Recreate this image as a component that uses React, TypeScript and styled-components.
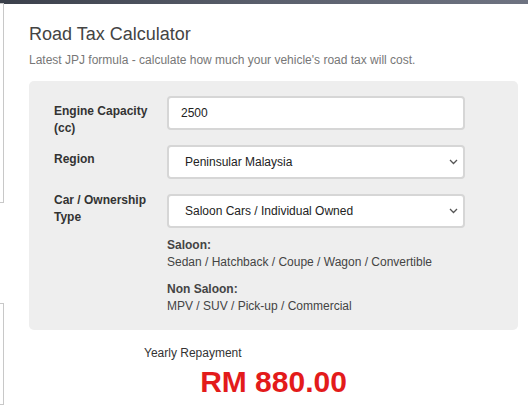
import React from "react";
import styled, { createGlobalStyle } from "styled-components";

const Global = createGlobalStyle`
  html, body { margin: 0; padding: 0; background: #fff; }
  body { font-family: "Liberation Sans", Arial, sans-serif; color: #333; }
  * { box-sizing: border-box; }
`;

const Page = styled.div`
  position: relative;
  width: 528px;
  height: 412px;
  overflow: hidden;
  background: #fff;
`;

const TopBar = styled.div`
  height: 4px;
  background: linear-gradient(90deg, #3b404b 0%, #5a5f6c 50%, #6e7381 100%);
`;

const BehindBox = styled.div<{ $top: number; $height: number }>`
  margin-top: ${(p) => p.$top}px;
  margin-left: -20px;
  width: 24px;
  height: ${(p) => p.$height}px;
  border: 1px solid #c8c8c8;
`;

const Modal = styled.div`
  position: absolute;
  top: 4px;
  left: 10px;
  right: 0;
  bottom: 0;
  background: #fff;
  padding: 18px 10px 0 19px;
`;

const Title = styled.h2`
  margin: 0;
  font-size: 18px;
  font-weight: normal;
  line-height: 24px;
  color: #444;
`;

const Subtitle = styled.p`
  margin: 6px 0 0;
  font-size: 12px;
  line-height: 16px;
  color: #777;
`;

const Panel = styled.div`
  margin-top: 13px;
  width: 489px;
  background: #eeeeee;
  border-radius: 5px;
  padding: 15px 53px 15px 25px;
  display: flex;
  flex-direction: column;
  gap: 15px;
`;

const Row = styled.div`
  display: grid;
  grid-template-columns: 100px 1fr;
  column-gap: 13px;
  align-items: start;
`;

const Label = styled.label<{ $offset: number }>`
  font-size: 12px;
  font-weight: bold;
  line-height: 17px;
  color: #333;
  margin-top: ${(p) => p.$offset}px;
  margin-bottom: -12px;
`;

const fieldBase = `
  width: 100%;
  height: 34px;
  border: 2px solid #d6d6d6;
  border-radius: 4px;
  background: #fff;
  font-family: "Liberation Sans", Arial, sans-serif;
  font-size: 12px;
  color: #222;
  outline: none;
`;

const Input = styled.input`
  ${fieldBase}
  padding: 0 12px;
`;

const SelectWrap = styled.div`
  position: relative;
`;

const Select = styled.select`
  ${fieldBase}
  appearance: none;
  -webkit-appearance: none;
  padding: 0 16px;
`;

const Chevron = styled.svg`
  position: absolute;
  right: 7px;
  top: 14px;
  pointer-events: none;
`;

const Notes = styled.div`
  grid-column: 2;
  margin-top: 9px;
  display: flex;
  flex-direction: column;
  gap: 10px;
`;

const NoteGroup = styled.div`
  font-size: 12px;
  line-height: 17px;
  color: #444;
`;

const NoteTitle = styled.div`
  font-weight: bold;
  color: #444;
`;

const Result = styled.div`
  width: 489px;
  padding-top: 15px;
  display: flex;
  flex-direction: column;
`;

const ResultLabel = styled.div`
  padding-left: 115px;
  font-size: 12px;
  line-height: 16px;
  color: #333;
`;

const Amount = styled.div`
  margin-top: 4px;
  text-align: center;
  font-size: 30px;
  font-weight: bold;
  line-height: 34px;
  color: #e31b1b;
`;

const ChevronIcon = () => (
  <Chevron width="9" height="6" viewBox="0 0 9 6">
    <path d="M1 1 L4.5 4.5 L8 1" fill="none" stroke="#555" strokeWidth="1.3" />
  </Chevron>
);

export default function App() {
  return (
    <>
      <Global />
      <Page>
        <TopBar />
        <BehindBox $top={-1} $height={200} />
        <BehindBox $top={100} $height={102} />
        <Modal>
          <Title>Road Tax Calculator</Title>
          <Subtitle>
            Latest JPJ formula - calculate how much your vehicle's road tax will cost.
          </Subtitle>
          <Panel>
            <Row>
              <Label $offset={7}>Engine Capacity (cc)</Label>
              <Input defaultValue="2500" />
            </Row>
            <Row>
              <Label $offset={6}>Region</Label>
              <SelectWrap>
                <Select defaultValue="pm">
                  <option value="pm">Peninsular Malaysia</option>
                </Select>
                <ChevronIcon />
              </SelectWrap>
            </Row>
            <Row>
              <Label $offset={-2}>Car / Ownership Type</Label>
              <SelectWrap>
                <Select defaultValue="si">
                  <option value="si">Saloon Cars / Individual Owned</option>
                </Select>
                <ChevronIcon />
              </SelectWrap>
              <Notes>
                <NoteGroup>
                  <NoteTitle>Saloon:</NoteTitle>
                  Sedan / Hatchback / Coupe / Wagon / Convertible
                </NoteGroup>
                <NoteGroup>
                  <NoteTitle>Non Saloon:</NoteTitle>
                  MPV / SUV / Pick-up / Commercial
                </NoteGroup>
              </Notes>
            </Row>
          </Panel>
          <Result>
            <ResultLabel>Yearly Repayment</ResultLabel>
            <Amount>RM 880.00</Amount>
          </Result>
        </Modal>
      </Page>
    </>
  );
}
